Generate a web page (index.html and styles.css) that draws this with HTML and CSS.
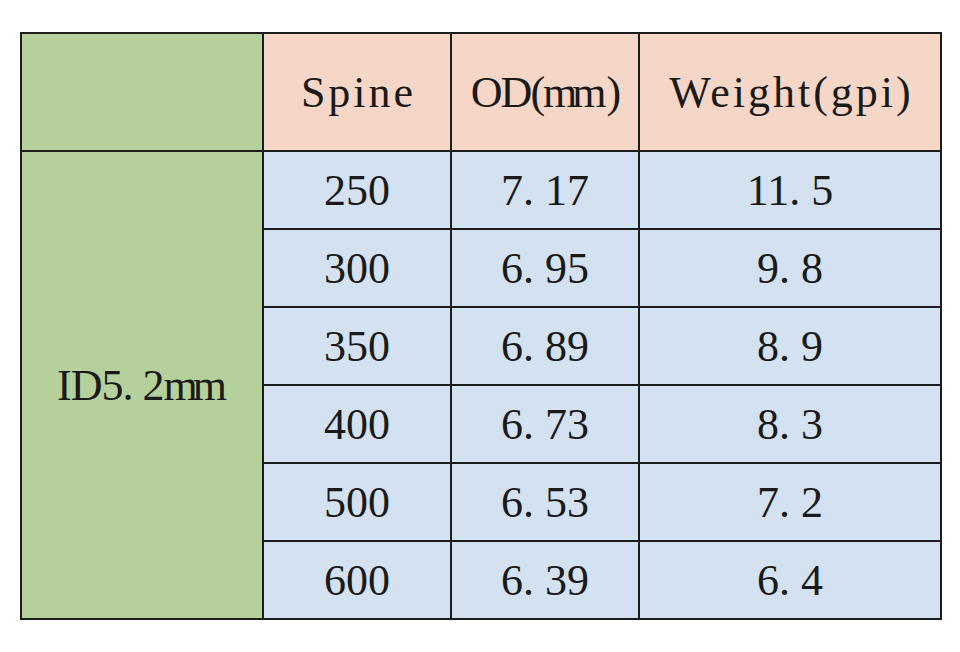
FILE: index.html
```html
<!DOCTYPE html>
<html>

<head>
  <title>Spine table</title>
  <link rel="stylesheet" href="styles.css">
</head>

<body>
  <table class="spec-table">
    <colgroup>
      <col class="col-id">
      <col class="col-spine">
      <col class="col-od">
      <col class="col-weight">
    </colgroup>
    <thead>
      <tr>
        <th class="id-cell"></th>
        <th class="head-wide">Spine</th>
        <th class="head-tight">OD(<span class="narrow">mm</span>)</th>
        <th class="head-wide">Weight(gpi)</th>
      </tr>
    </thead>
    <tbody>
      <tr>
        <td class="id-cell" rowspan="6">ID5. 2<span class="narrow">mm</span></td>
        <td>250</td>
        <td>7. 17</td>
        <td>11. 5</td>
      </tr>
      <tr>
        <td>300</td>
        <td>6. 95</td>
        <td>9. 8</td>
      </tr>
      <tr>
        <td>350</td>
        <td>6. 89</td>
        <td>8. 9</td>
      </tr>
      <tr>
        <td>400</td>
        <td>6. 73</td>
        <td>8. 3</td>
      </tr>
      <tr>
        <td>500</td>
        <td>6. 53</td>
        <td>7. 2</td>
      </tr>
      <tr>
        <td>600</td>
        <td>6. 39</td>
        <td>6. 4</td>
      </tr>
    </tbody>
  </table>
</body>

</html>
```

FILE: styles.css
```css
body {
  margin: 0;
  background-color: #fff;
  font-family: 'Liberation Serif', 'Times New Roman', serif;
  color: #1a1a1a;
}

.spec-table {
  margin: 32px 0 0 20px;
  width: 920px;
  border-collapse: collapse;
  table-layout: fixed;
}

.col-id {
  width: 242px;
}

.col-spine {
  width: 188px;
}

.col-od {
  width: 188px;
}

.col-weight {
  width: 302px;
}

.spec-table th,
.spec-table td {
  border: 2px solid #1c1c1c;
  padding: 0;
  text-align: center;
  font-weight: normal;
  font-size: 44px;
}

.spec-table th {
  height: 116px;
  background-color: #f6d6c6;
}

.spec-table td {
  height: 76px;
  background-color: #d3e1f1;
}

.spec-table .id-cell {
  background-color: #b5d09b;
  letter-spacing: -1px;
}

.spec-table .head-wide {
  letter-spacing: 3px;
  padding-left: 3px;
}

.spec-table .head-tight {
  letter-spacing: -2px;
}

.narrow {
  letter-spacing: -5px;
  margin-right: 5px;
}
```
